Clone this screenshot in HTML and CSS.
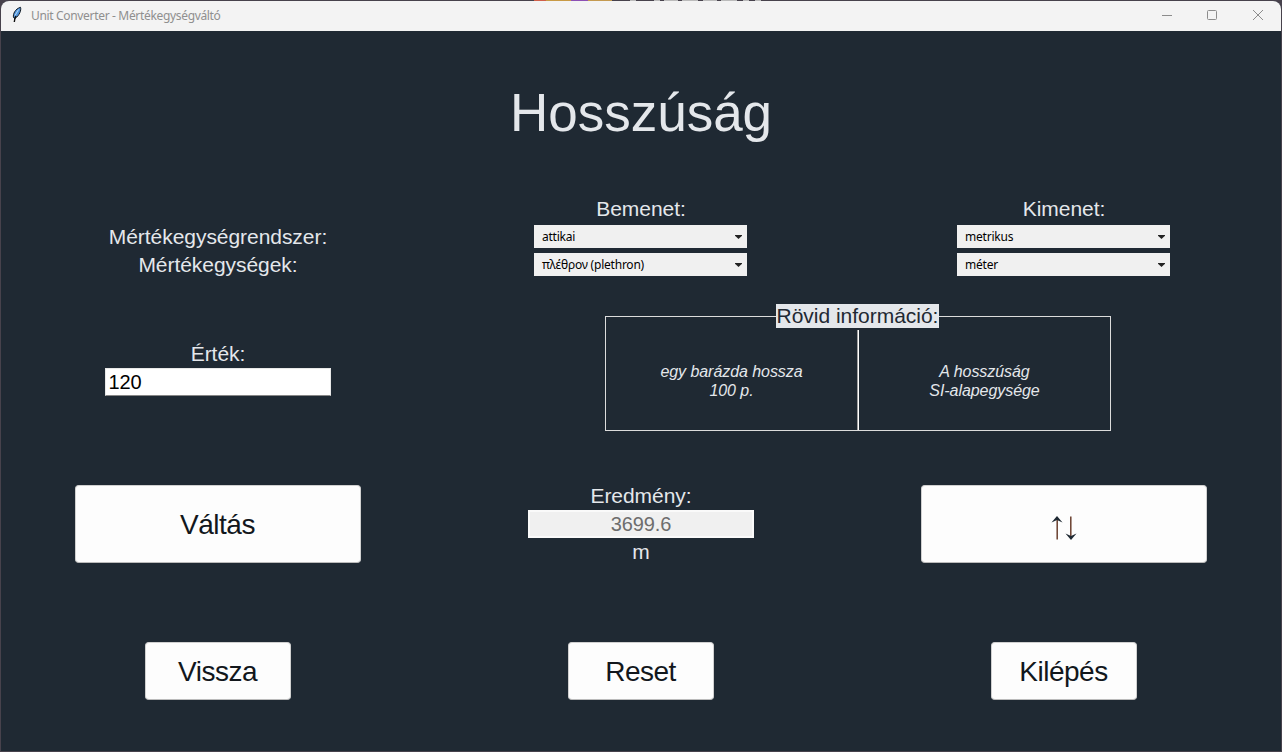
FILE: index.html
```html
<!DOCTYPE html>
<html lang="hu">
<head>
<meta charset="utf-8">
<title>Unit Converter - Mértékegységváltó</title>
<link rel="stylesheet" href="styles.css">
</head>
<body>
<div class="window">
  <header class="titlebar">
    <svg class="feather" width="12" height="18" viewBox="0 0 12 18">
      <path d="M2.5 11.500C1.800 8 4 3 9.500 1.300C10.500 4 8.500 9.500 4 12.500Z" fill="#4f93dc" stroke="#101820" stroke-width="1"/>
      <path d="M7.500 3.500L4 9.500" stroke="#b9ddf6" stroke-width="1" fill="none"/>
      <path d="M5 10L4 12L3.300 16" stroke="#101010" stroke-width="1.400" fill="none"/>
    </svg>
    <span class="caption">Unit Converter - Mértékegységváltó</span>
    <svg class="controls" width="106" height="12" viewBox="0 0 106 12" fill="none" stroke="#8c8c8c" stroke-width="1">
      <path d="M2 6.500H12"/>
      <rect x="47.500" y="1.500" width="9" height="9" rx="1"/>
      <path d="M93 1L103 11M103 1L93 11"/>
    </svg>
  </header>
  <main class="content">
    <h1 class="heading">Hosszúság</h1>
    <section class="row units">
      <div class="stack unit-labels">
        <div class="label">Mértékegységrendszer:</div>
        <div class="label">Mértékegységek:</div>
      </div>
      <div class="stack">
        <div class="label">Bemenet:</div>
        <div class="combo"><span>attikai</span><i class="arrow"></i></div>
        <div class="combo"><span>πλέθρον (plethron)</span><i class="arrow"></i></div>
      </div>
      <div class="stack">
        <div class="label">Kimenet:</div>
        <div class="combo"><span>metrikus</span><i class="arrow"></i></div>
        <div class="combo"><span>méter</span><i class="arrow"></i></div>
      </div>
    </section>
    <section class="row details">
      <div class="field">
        <div class="label">Érték:</div>
        <div class="entry">120</div>
      </div>
      <div class="info">
        <div class="info-title">Rövid információ:</div>
        <div class="note">egy barázda hossza<br>100 p.</div>
        <div class="separator"></div>
        <div class="note">A hosszúság<br>SI-alapegysége</div>
      </div>
    </section>
    <section class="row results">
      <button class="button large">Váltás</button>
      <div class="field">
        <div class="label">Eredmény:</div>
        <div class="entry readonly">3699.6</div>
        <div class="label">m</div>
      </div>
      <button class="button large swap">
        <svg width="26" height="26" viewBox="0 0 26 26" fill="none" stroke="#6b4030" stroke-width="1.500">
          <path d="M6.200 24.500V3M19.800 1.500V23"/>
          <path d="M6 1L11.500 7.500L6 5L0.500 7.500ZM20 25L14.500 18.500L20 21L25.500 18.500Z" fill="#1f2933" stroke="none"/>
        </svg>
      </button>
    </section>
    <section class="row actions">
      <button class="button">Vissza</button>
      <button class="button">Reset</button>
      <button class="button">Kilépés</button>
    </section>
  </main>
</div>
</body>
</html>
```

FILE: styles.css
```css
* { box-sizing: border-box; }

body {
  margin: 0;
  width: 1282px;
  height: 752px;
  padding: 1px;
  overflow: hidden;
  font-family: "Liberation Sans", Arial, sans-serif;
  background:
    linear-gradient(90deg, transparent 534px, #d0604a 534px 546px, #c89a45 546px 571px, #8c50b4 571px 588px, #c49a50 588px 612px, transparent 612px 630px, #bbb 630px 636px, transparent 636px 654px, #bbb 654px 660px, transparent 660px 664px, #bbb 664px 678px, transparent 678px 682px, #bbb 682px 698px, transparent 698px 703px, #bbb 703px 717px, transparent 717px 721px, #bbb 721px 737px, transparent 737px 743px, #bbb 743px 749px, transparent 749px 755px, #bbb 755px 761px, transparent 761px) 0 0 / 1282px 1px no-repeat,
    #47424c;
}

.window {
  height: 750px;
  border-radius: 8px 8px 0 0;
  overflow: hidden;
  background: #1f2933;
}

.titlebar {
  display: flex;
  align-items: center;
  height: 30px;
  padding: 0 15px 2px 10px;
  background: #f3f3f3;
}

.caption {
  margin-left: 8px;
  font: 12px "Noto Sans", "Open Sans", sans-serif;
  letter-spacing: -0.33px;
  color: #8f8f8f;
}

.controls { margin-left: auto; }

.content {
  display: grid;
  grid-template-rows: 166px 107px 180px 158px 58px;
  padding: 0 6px 0 5px;
}

.heading {
  margin: 0;
  padding: 52px 0 0 1px;
  font-size: 53px;
  font-weight: 400;
  line-height: 60px;
  text-align: center;
  color: #e4e7eb;
}

.row {
  display: grid;
  grid-template-columns: repeat(3, 1fr);
  grid-template-rows: max-content;
  justify-items: center;
}

.stack {
  display: flex;
  flex-direction: column;
  align-items: center;
  gap: 5px;
}

.stack > .label:first-child { margin-bottom: -1px; }
.unit-labels { padding-top: 28px; }

.label {
  height: 24px;
  padding-left: 1px;
  font-size: 21px;
  line-height: 24px;
  letter-spacing: -0.05px;
  white-space: nowrap;
  color: #e4e7eb;
}

.combo {
  display: flex;
  align-items: center;
  justify-content: space-between;
  width: 213px;
  height: 23px;
  padding: 0 5px 0 8px;
  font: 12px "Noto Sans", "Open Sans", sans-serif;
  letter-spacing: -0.22px;
  color: #000;
  background: #f0f0f0;
}

.arrow {
  width: 7px;
  height: 4px;
  margin-top: 1px;
  background: #222;
  clip-path: polygon(0 0, 100% 0, 100% 20%, 50% 100%, 0 20%);
}

.field {
  display: flex;
  flex-direction: column;
  align-items: center;
  gap: 2px;
}

.details > .field { padding-top: 38px; }

.entry {
  width: 226px;
  height: 28px;
  padding: 0 3px;
  border: 1px solid #e8e8e8;
  border-bottom-color: #868686;
  font-size: 20px;
  line-height: 26px;
  letter-spacing: -0.1px;
  color: #000;
  background: #fff;
}

.entry.readonly {
  padding-left: 4px;
  border: 2px solid #fafafa;
  line-height: 24px;
  text-align: center;
  color: #6d6d6d;
  background: #f0f0f0;
}

.info {
  display: grid;
  position: relative;
  grid-column: 2 / 4;
  grid-template-columns: 1fr 2px 1fr;
  width: 506px;
  height: 115px;
  margin-top: 12px;
  margin-left: 12px;
  border: 1px solid #dcdcdc;
}

.info-title {
  position: absolute;
  top: -13px;
  left: 170px;
  width: 163px;
  font-size: 21px;
  line-height: 24px;
  letter-spacing: -0.02px;
  text-align: center;
  white-space: nowrap;
  color: #1f2933;
  background: #e4e7eb;
}

.separator {
  margin-top: 13px;
  border-left: 1px solid #a0a0a0;
  border-right: 1px solid #fff;
}

.note {
  padding-top: 45px;
  font-size: 16px;
  font-style: italic;
  line-height: 19px;
  letter-spacing: -0.06px;
  text-align: center;
  color: #e4e7eb;
}

.button {
  display: flex;
  align-items: center;
  justify-content: center;
  width: 146px;
  height: 58px;
  padding: 2px 0 0;
  border: 1px solid #d0d0d0;
  border-bottom-color: #bbb;
  border-radius: 4px;
  font: 28px "Liberation Sans", Arial, sans-serif;
  letter-spacing: -0.5px;
  color: #12171c;
  background: #fdfdfd;
}

.button.large {
  width: 286px;
  height: 78px;
  margin-top: 1px;
}

.button.swap { padding-top: 7px; }
```
